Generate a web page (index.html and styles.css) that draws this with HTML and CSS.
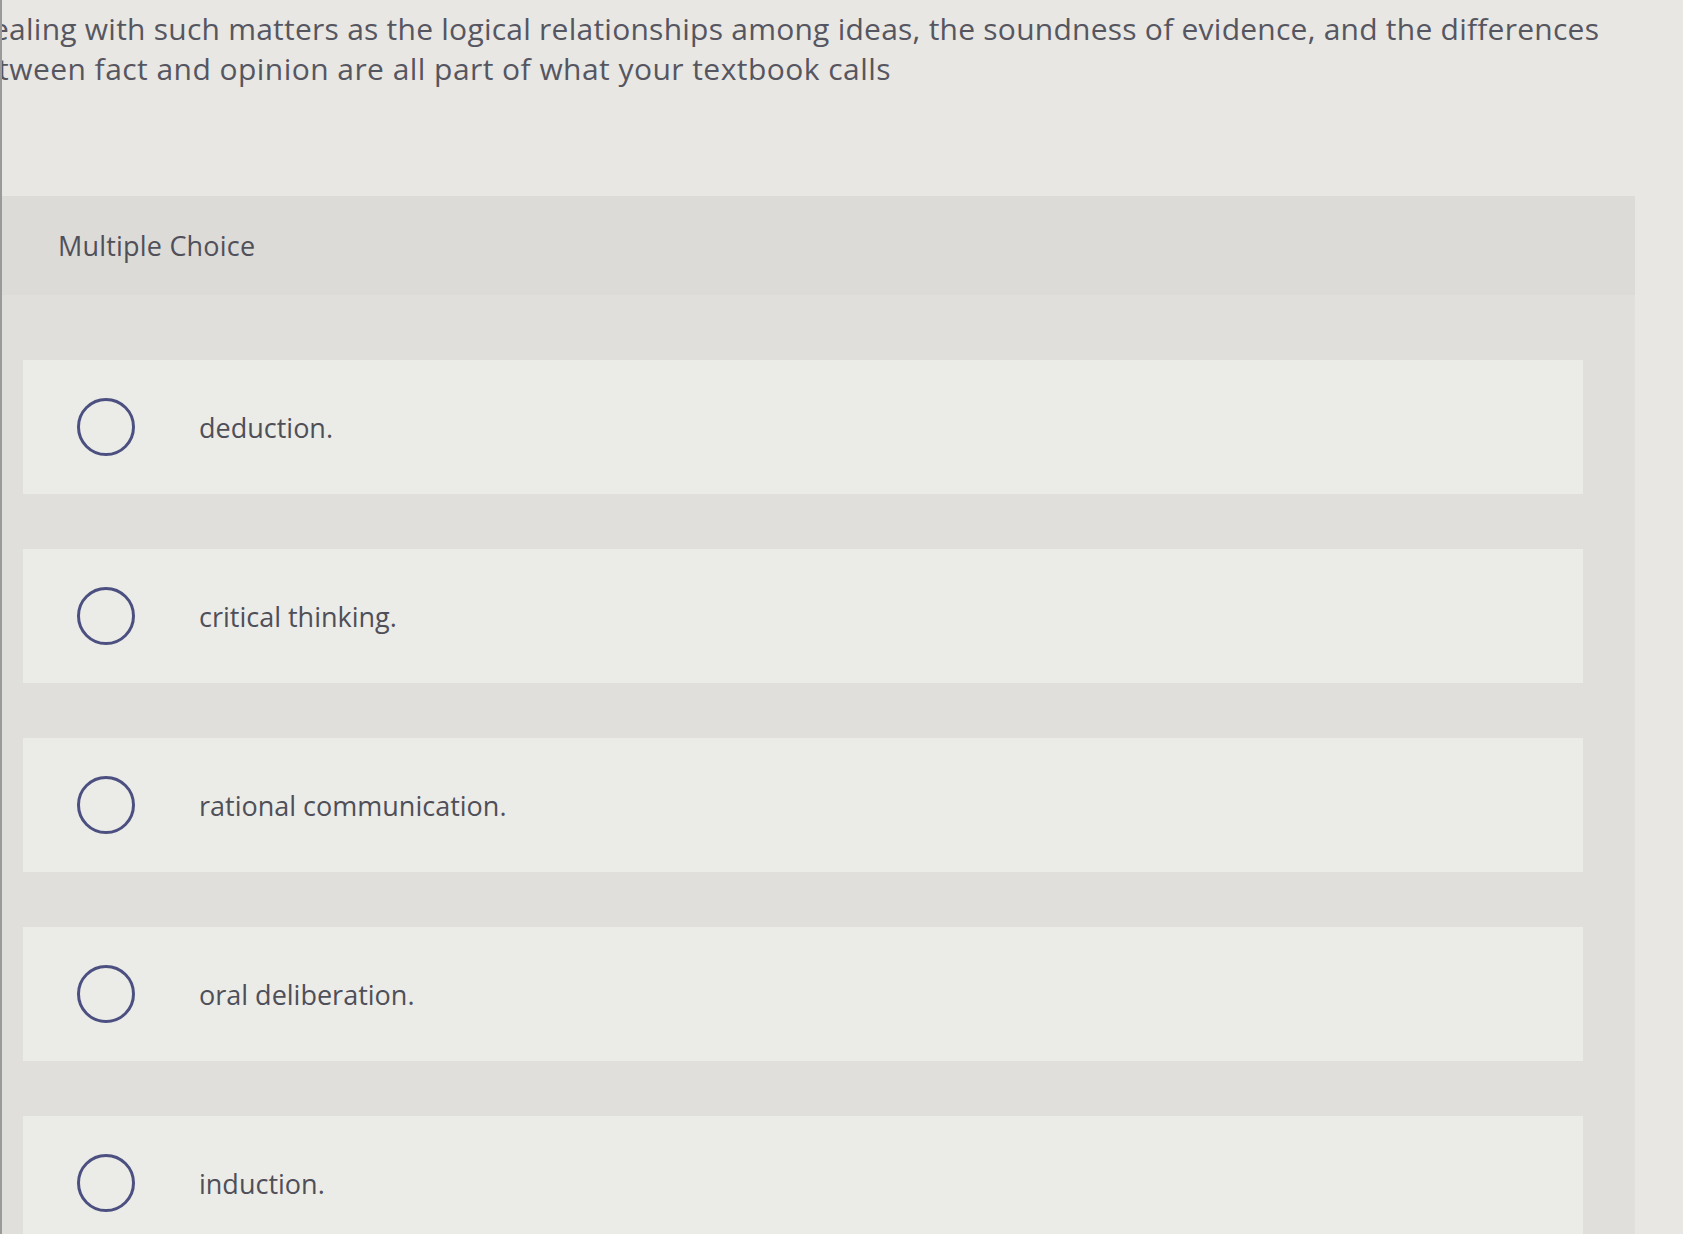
FILE: index.html
```html
<!DOCTYPE html>
<html lang="en">
<head>
<meta charset="utf-8">
<title>Multiple Choice</title>
<link rel="stylesheet" href="styles.css">
</head>
<body>
<div class="page">
  <div class="question">
    <span class="qline qline-1">Dealing with such matters as the logical relationships among ideas, the soundness of evidence, and the differences</span>
    <span class="qline qline-2">between fact and opinion are all part of what your textbook calls</span>
  </div>

  <section class="panel">
    <header class="panel-head">Multiple Choice</header>
    <div class="panel-body">
      <label class="option"><span class="radio"></span><span class="option-text">deduction.</span></label>
      <label class="option"><span class="radio"></span><span class="option-text">critical thinking.</span></label>
      <label class="option"><span class="radio"></span><span class="option-text">rational communication.</span></label>
      <label class="option"><span class="radio"></span><span class="option-text">oral deliberation.</span></label>
      <label class="option"><span class="radio"></span><span class="option-text">induction.</span></label>
    </div>
  </section>
</div>
</body>
</html>
```

FILE: styles.css
```css
html, body {
  margin: 0;
  padding: 0;
}

body {
  background: #e8e7e3;
  font-family: "Open Sans", "Noto Sans", "Liberation Sans", sans-serif;
  color: #54545e;
  height: 1234px;
  overflow: hidden;
}

.page {
  border-left: 2px solid #9a9a98;
  min-height: 1234px;
  box-sizing: border-box;
}

.question {
  overflow: hidden;
  white-space: nowrap;
  font-size: 30px;
  line-height: 40px;
  padding-top: 9px;
  color: #565661;
}

.qline {
  display: block;
}

.qline-1 {
  margin-left: -32px;
  letter-spacing: 0.24px;
}

.qline-2 {
  margin-left: -40px;
  letter-spacing: 0.45px;
}

.panel {
  margin-top: 107px;
  width: 1633px;
  background: #dcdbd7;
}

.panel-head {
  height: 99px;
  display: flex;
  align-items: center;
  padding-left: 56px;
  font-size: 27px;
  letter-spacing: 0.2px;
  color: #50505a;
  background: #dcdbd7;
}

.panel-body {
  background: #e0dfdb;
  padding: 65px 52px 60px 21px;
  display: flex;
  flex-direction: column;
  gap: 55px;
}

.option {
  height: 134px;
  background: #ebebe8;
  display: flex;
  align-items: center;
  padding-left: 54px;
}

.radio {
  width: 52px;
  height: 52px;
  border: 3px solid #4c5080;
  border-radius: 50%;
  flex: none;
}

.option-text {
  margin-left: 64px;
  font-size: 27px;
  color: #4f4f58;
}
```
